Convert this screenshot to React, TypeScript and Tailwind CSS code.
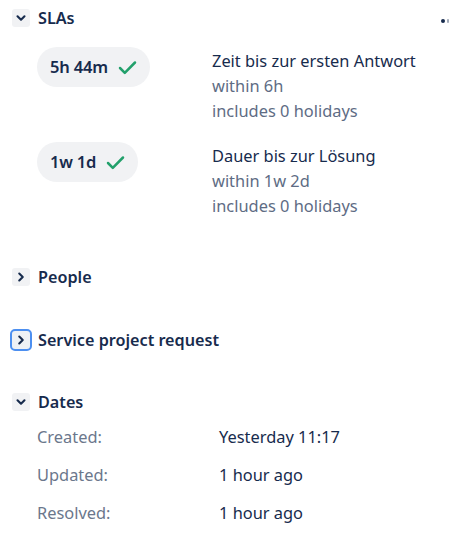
import { ChevronDown, ChevronRight } from "lucide-react";

function Tick() {
  return (
    <svg width="19" height="15" viewBox="0 0 19 15" fill="none" className="text-[#22a06b]">
      <path d="M2 8L6.8 12.8L17 2.5" stroke="currentColor" strokeWidth="2.5" strokeLinecap="round" strokeLinejoin="round" />
    </svg>
  );
}

function SectionHeader({ title, open, focused }: { title: string; open?: boolean; focused?: boolean }) {
  return (
    <div className="flex items-center h-[36px]">
      <div className="w-[26px] flex items-center">
        {focused ? (
          <div className="ml-[-2px] w-[22px] h-[22px] rounded-[5px] border-2 border-[#4c8ff0] bg-[#eef1f5] flex items-center justify-center">
            <ChevronRight size={14} strokeWidth={3.6} className="text-[#172b4d]" />
          </div>
        ) : (
          <div className="w-[18px] h-[18px] rounded-[3px] bg-[#f1f2f4] flex items-center justify-center">
            {open ? (
              <ChevronDown size={14} strokeWidth={3.6} className="text-[#172b4d]" />
            ) : (
              <ChevronRight size={14} strokeWidth={3.6} className="text-[#172b4d]" />
            )}
          </div>
        )}
      </div>
      <span className="text-[16.2px] font-semibold text-[#172b4d]">{title}</span>
    </div>
  );
}

function SlaRow({ time, name, goal }: { time: string; name: string; goal: string }) {
  return (
    <div className="flex items-start">
      <div className="w-[175px] shrink-0">
        <div className="inline-flex items-center gap-[10px] h-[40px] px-[13px] rounded-full bg-[#f1f2f4]">
          <span className="text-[16.5px] font-semibold text-[#172b4d] tracking-[-0.2px]">{time}</span>
          <Tick />
        </div>
      </div>
      <div className="mt-[1px] text-[16.4px] leading-[25px]">
        <div className="text-[#172b4d]">{name}</div>
        <div className="text-[#5e6c84]">{goal}</div>
        <div className="text-[#5e6c84]">includes 0 holidays</div>
      </div>
    </div>
  );
}

export default function App() {
  const dates = [
    ["Created:", "Yesterday 11:17"],
    ["Updated:", "1 hour ago"],
    ["Resolved:", "1 hour ago"],
  ];
  return (
    <div className="relative w-[450px] h-[553px] bg-white pl-[12px] overflow-hidden" style={{ fontFamily: '"Segoe UI", "Noto Sans", sans-serif' }}>
      <div className="absolute right-[5px] top-[19px] w-[4px] h-[4px] rounded-full bg-[#172b4d]" />
      <div className="absolute right-[1px] top-[19px] w-[2px] h-[4px] rounded-full bg-[#172b4d]/40" />
      <SectionHeader title="SLAs" open />
      <div className="pl-[25px] mt-[11px] flex flex-col gap-[19px]">
        <SlaRow time="5h 44m" name="Zeit bis zur ersten Antwort" goal="within 6h" />
        <SlaRow time="1w 1d" name="Dauer bis zur Lösung" goal="within 1w 2d" />
      </div>
      <div className="mt-[41px]">
        <SectionHeader title="People" />
      </div>
      <div className="mt-[27px]">
        <SectionHeader title="Service project request" focused />
      </div>
      <div className="mt-[26px]">
        <SectionHeader title="Dates" open />
      </div>
      <div className="pl-[25px] mt-[5px] flex flex-col gap-[14px]">
        {dates.map(([label, value]) => (
          <div key={label} className="flex items-center h-[24px] text-[16.4px]">
            <span className="w-[182px] text-[#6b778c]">{label}</span>
            <span className="text-[#172b4d]">{value}</span>
          </div>
        ))}
      </div>
    </div>
  );
}
